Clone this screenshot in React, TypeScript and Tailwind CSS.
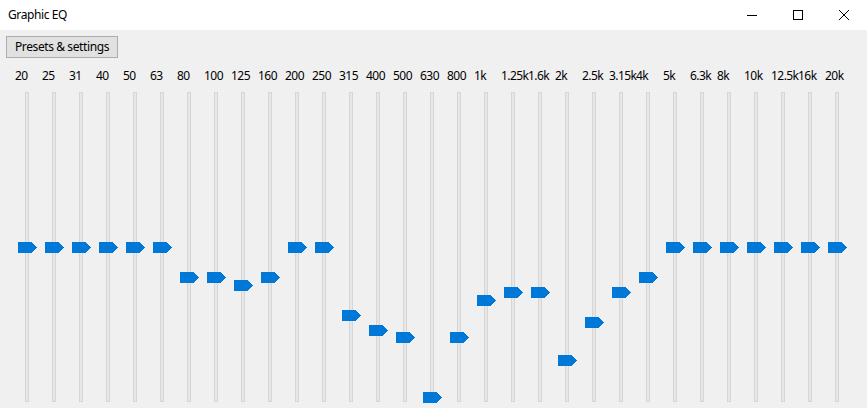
const bands: { label: string; top: number }[] = [
  { label: '20', top: 242 },
  { label: '25', top: 242 },
  { label: '31', top: 242 },
  { label: '40', top: 242 },
  { label: '50', top: 242 },
  { label: '63', top: 242 },
  { label: '80', top: 272 },
  { label: '100', top: 272 },
  { label: '125', top: 280 },
  { label: '160', top: 272 },
  { label: '200', top: 242 },
  { label: '250', top: 242 },
  { label: '315', top: 310 },
  { label: '400', top: 325 },
  { label: '500', top: 332 },
  { label: '630', top: 392 },
  { label: '800', top: 332 },
  { label: '1k', top: 295 },
  { label: '1.25k', top: 287 },
  { label: '1.6k', top: 287 },
  { label: '2k', top: 355 },
  { label: '2.5k', top: 317 },
  { label: '3.15k', top: 287 },
  { label: '4k', top: 272 },
  { label: '5k', top: 242 },
  { label: '6.3k', top: 242 },
  { label: '8k', top: 242 },
  { label: '10k', top: 242 },
  { label: '12.5k', top: 242 },
  { label: '16k', top: 242 },
  { label: '20k', top: 242 },
];

const TRACK_TOP = 92;

const Thumb = () => (
  <svg width="19" height="11" viewBox="0 0 19 11" shapeRendering="crispEdges">
    <polygon points="0,0 14,0 19,5.5 14,11 0,11" fill="#0078d7" />
  </svg>
);

const Band = ({ label, top }: { label: string; top: number }) => (
  <div className="flex flex-col w-[27px] shrink-0">
    <div className="h-[16px] text-[12px] leading-[16px] tracking-[-0.55px] whitespace-nowrap text-black">{label}</div>
    <div className="relative h-[310px] mt-[8px]">
      <div className="ml-[10px] w-[4px] h-full border border-[#d6d6d6] bg-[#e7e7e7]" />
      <div className="absolute left-[3px] flex" style={{ top: top - TRACK_TOP }}>
        <Thumb />
      </div>
    </div>
  </div>
);

export default function App() {
  return (
    <div
      className="w-[867px] h-[408px] flex flex-col overflow-hidden bg-[#f0f0f0]"
      style={{ fontFamily: '"Noto Sans", "Open Sans", sans-serif' }}
    >
      <div className="h-[30px] bg-white flex items-center shrink-0">
        <span className="ml-[8px] text-[12px] tracking-[-0.4px] text-black">Graphic EQ</span>
        <div className="ml-auto flex items-center">
          <button className="w-[46px] h-[30px] flex items-center justify-center">
            <svg width="10" height="10" viewBox="0 0 10 10" shapeRendering="crispEdges">
              <line x1="0" y1="5" x2="10" y2="5" stroke="#000" strokeWidth="1" />
            </svg>
          </button>
          <button className="w-[46px] h-[30px] flex items-center justify-center">
            <svg width="10" height="10" viewBox="0 0 10 10" shapeRendering="crispEdges">
              <rect x="0.5" y="0.5" width="9" height="9" fill="none" stroke="#000" strokeWidth="1" />
            </svg>
          </button>
          <button className="w-[46px] h-[30px] flex items-center justify-center">
            <svg width="10" height="10" viewBox="0 0 10 10">
              <path d="M0 0 L10 10 M10 0 L0 10" stroke="#000" strokeWidth="1" />
            </svg>
          </button>
        </div>
      </div>
      <div className="flex-1 flex flex-col">
        <button className="ml-[6px] mt-[6px] w-[112px] h-[22px] border border-[#adadad] bg-[#e1e1e1] text-[12px] tracking-[-0.4px] text-black flex items-center justify-center">
          Presets &amp; settings
        </button>
        <div className="flex ml-[15px] mt-[10px]">
          {bands.map((b) => (
            <Band key={b.label} label={b.label} top={b.top} />
          ))}
        </div>
      </div>
    </div>
  );
}
